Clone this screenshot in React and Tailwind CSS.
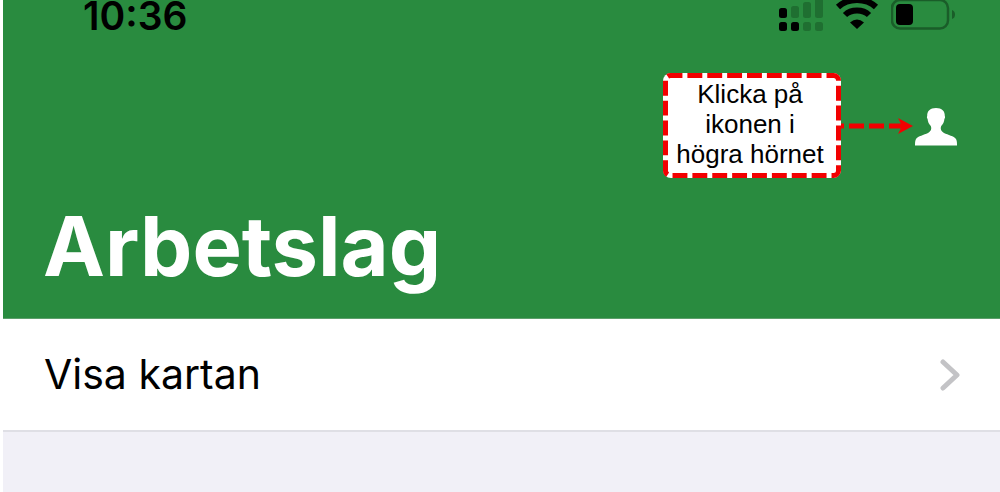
function SignalIcon() {
  return (
    <svg className="h-8 w-11" viewBox="0 0 44 32" role="img" aria-label="Signal">
      <g fill="#000">
        <rect x="0" y="8" width="8" height="10" rx="2.5" />
        <rect x="0" y="22" width="8" height="9" rx="2.5" />
        <rect x="12" y="22" width="8" height="9" rx="2.5" />
      </g>
      <g fill="#1f6f31">
        <rect x="12" y="6" width="8" height="12" rx="2.5" />
        <rect x="24" y="2" width="8" height="16" rx="2.5" />
        <rect x="36" y="-2" width="8" height="20" rx="2.5" />
        <rect x="24" y="22" width="8" height="9" rx="2.5" />
        <rect x="36" y="22" width="8" height="9" rx="2.5" />
      </g>
    </svg>
  );
}

function WifiIcon() {
  return (
    <svg className="h-8 w-11" viewBox="0 0 44 32" role="img" aria-label="Wi-Fi">
      <g fill="none" stroke="#000" strokeWidth="6">
        <path d="M3 7 C13 -2.5 31 -2.5 41 7" />
        <path d="M10 15 C16 9 28 9 34 15" />
      </g>
      <path d="M15 22.5 Q22 16.5 29 22.5 L22 29 Z" fill="#000" />
    </svg>
  );
}

function BatteryIcon() {
  return (
    <svg className="h-8 w-16" viewBox="0 0 64 32" role="img" aria-label="Batteri">
      <rect x="1" y="0" width="56" height="28.5" rx="8" fill="none" stroke="#1a5d29" strokeWidth="2.5" />
      <rect x="5" y="4" width="17" height="21" rx="4" fill="#000" />
      <path d="M61 10 Q64 11 64 14.5 Q64 18 61 19 Z" fill="#1a5d29" />
    </svg>
  );
}

function PersonIcon() {
  return (
    <svg className="h-10 w-[42px]" viewBox="0 0 42 40" aria-hidden="true">
      <path
        d="M21 2 C15 2 12 5 12.2 10 C11.6 11 12 12 12.6 13 C12.8 16 14 18 15.8 20 C17 23 16 25 13 27 C9 29 3 30 1 33 C0 35 0 37 0 39.5 H42 C42 37 42 35 41 33 C39 30 33 29 29 27 C26 25 25 23 26.2 20 C28 18 29.2 16 29.4 13 C30 12 30.4 11 29.8 10 C30 5 27 2 21 2 Z"
        fill="#fff"
      />
    </svg>
  );
}

function Arrow() {
  return (
    <svg className="h-5 w-[74px]" viewBox="0 0 74 20" aria-hidden="true">
      <path d="M0 10 H3 M8 10 H23 M28 10 H43 M48 10 H63" stroke="#f20000" strokeWidth="5" />
      <path d="M57 2 L72 10 L57 18 L61 10 Z" fill="#f20000" />
    </svg>
  );
}

function Callout() {
  return (
    <div className="relative w-[178px] rounded-lg bg-white pt-[6px] pr-1 pb-[9px] text-center font-['Liberation_Sans',sans-serif] text-[26px] leading-[30px] text-black">
      <p>
        Klicka på
        <br />
        ikonen i
        <br />
        högra hörnet
      </p>
      <svg className="absolute inset-0 h-full w-full" viewBox="0 0 178 105" aria-hidden="true">
        <rect
          x="2.5"
          y="2.5"
          width="173"
          height="100"
          rx="5"
          fill="none"
          stroke="#f20000"
          strokeWidth="5"
          strokeDasharray="15 5"
          strokeDashoffset="3"
          pathLength="540"
        />
      </svg>
    </div>
  );
}

export default function App() {
  return (
    <div className="min-h-screen bg-white pl-[3px] font-[Inter,sans-serif]">
      <div className="flex min-h-screen flex-col bg-[#f1f0f7]">
        <header className="border-b border-[#5c9f6b] bg-[#298b3f] pb-5">
          <div className="flex h-8 items-start justify-between pr-[45px] pl-20">
            <time className="text-[39px] leading-8 font-semibold text-black">10:36</time>
            <div className="flex gap-3">
              <SignalIcon />
              <WifiIcon />
              <BatteryIcon />
            </div>
          </div>
          <div className="mt-[41px] flex items-center justify-end pr-[43px]">
            <Callout />
            <Arrow />
            <button type="button" aria-label="Profil">
              <PersonIcon />
            </button>
          </div>
          <h1 className="mt-4 pl-10 text-[83px] leading-[104px] font-bold text-white">Arbetslag</h1>
        </header>
        <a
          href="#karta"
          className="flex h-[113px] items-center justify-between border-b-2 border-[#dfdfe5] bg-white pt-px pr-10 pl-[41px] text-[41px] text-black"
        >
          Visa kartan
          <svg className="h-8 w-5" viewBox="0 0 20 32" aria-hidden="true">
            <path d="M3 3 L17 16 L3 29" fill="none" stroke="#c3c3c6" strokeWidth="5" strokeLinecap="round" strokeLinejoin="round" />
          </svg>
        </a>
      </div>
    </div>
  );
}
